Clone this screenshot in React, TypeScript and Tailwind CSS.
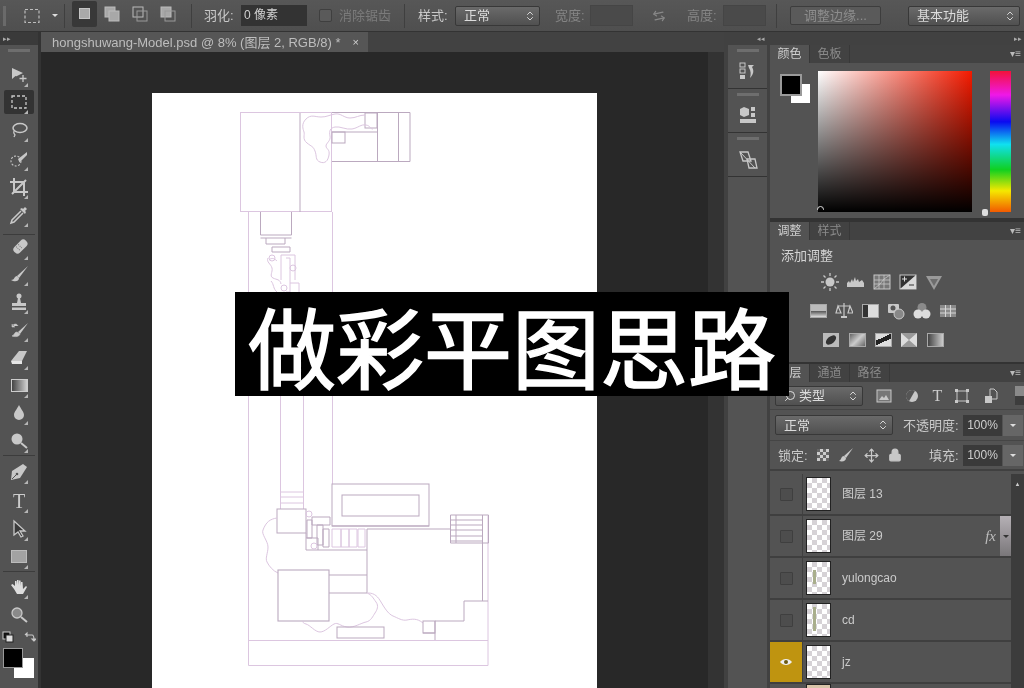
import type { ReactNode } from 'react';
import { ChevronsUpDown, Lock, Move, ArrowLeftRight, Search } from 'lucide-react';

const FONT = '[font-family:"Liberation_Sans","Noto_Sans_CJK_SC",sans-serif]';
const TXT = 'text-[#c9c9c9] text-[13px] leading-none whitespace-nowrap';

// small svg wrapper, all tool icons are drawn on a 20 box
function Svg({ children, size = 20, box = 20 }: { children: ReactNode; size?: number; box?: number }) {
  return (
    <svg width={size} height={size} viewBox={`0 0 ${box} ${box}`} className="shrink-0">
      {children}
    </svg>
  );
}

const G = '#c8c8c8';

function Corner() {
  return <span className="absolute right-[6px] bottom-[0px] w-0 h-0 border-l-[4px] border-l-transparent border-b-[4px] border-b-[#b5b5b5]" />;
}

function Tool({ h, active, corner = true, children }: { h: string; active?: boolean; corner?: boolean; children: ReactNode }) {
  return (
    <div className={`relative shrink-0 flex items-center justify-center ${h}`}>
      <div className={`relative w-[30px] h-[24px] rounded-[2px] flex items-center justify-center ${active ? 'bg-[#333333]' : ''}`}>
        {children}
        {corner && <Corner />}
      </div>
    </div>
  );
}

function ToolSep() {
  return <div className="shrink-0 h-[1px] mx-[3px] bg-[#3c3c3c]" />;
}

function ToolBar() {
  return (
    <div className="w-[38px] shrink-0 bg-[#535353] flex flex-col">
      <div className="h-[13px] bg-[#3a3a3a] text-[#aaa] text-[7px] leading-[13px] pl-[3px]">▸▸</div>
      <div className="h-[3px] mx-[8px] mt-[4px] mb-[9px] bg-[#6e6e6e]" />
      <Tool h="h-[27px]"><Svg><path d="M3 3v11l3.500-3 1 .2L14 8z" fill={G} /><path d="M14 10v7M10.500 13.500h7" stroke={G} strokeWidth="1.300" /></Svg></Tool>
      <Tool h="h-[28px]" active><Svg><rect x="3" y="4" width="14" height="12" fill="none" stroke={G} strokeWidth="1.300" strokeDasharray="3 2" /></Svg></Tool>
      <Tool h="h-[28px]"><Svg><ellipse cx="11" cy="8" rx="7" ry="4.500" fill="none" stroke={G} strokeWidth="1.500" /><path d="M5 11c-1 2 0 3 1 4l-1 2" fill="none" stroke={G} strokeWidth="1.300" /></Svg></Tool>
      <Tool h="h-[29px]"><Svg><circle cx="7" cy="12" r="5" fill="none" stroke={G} strokeWidth="1.100" strokeDasharray="2 1.500" /><path d="M18 3 9 10l1.500 3.500L18 6z" fill={G} /></Svg></Tool>
      <Tool h="h-[28px]"><Svg><path d="M5 1v14h14M1 5h14v14M3 17 17 3" fill="none" stroke={G} strokeWidth="2" /></Svg></Tool>
      <Tool h="h-[28px]"><Svg><path d="m12 6-9 9-1 3 3-1 9-9" fill="none" stroke={G} strokeWidth="1.500" /><path d="m11 4 5 5 1-2-1-1 2-2-2-2-2 2-1-1z" fill={G} /></Svg></Tool>
      <div className="h-[5px] shrink-0" />
      <ToolSep />
      <div className="h-[1px] shrink-0" />
      <Tool h="h-[24px]"><Svg><g transform="rotate(-45 10 10)"><rect x="4" y="6" width="16" height="8" rx="3.500" fill={G} /><path d="M9 7v6M12 7v6" stroke="#777" strokeDasharray="1 1" /></g></Svg></Tool>
      <Tool h="h-[28px]"><Svg><path d="M19 2 8 12l2 2z" fill={G} /><path d="M8 12c-3 0-2 4-6 4 3 2 8 2 8-2z" fill={G} /></Svg></Tool>
      <Tool h="h-[28px]"><Svg><circle cx="10" cy="4" r="2.500" fill={G} /><path d="M9 6h2l1 5h5v3H3v-3h5zM3 15.500h14V18H3z" fill={G} /></Svg></Tool>
      <Tool h="h-[28px]"><Svg><path d="M19 3 9 12l2 2z" fill={G} /><path d="M8 12c-3 0-2 3-5 4 3 1 7 1 8-2zM3 6c3-3 5-2 6 0M3 4v3h3" fill={G} stroke={G} strokeWidth=".600" /></Svg></Tool>
      <Tool h="h-[28px]"><Svg><path d="m10 3 8 0-5 10H2z" fill={G} /><path d="M2 13h11v3H3z" fill="#e5e5e5" /></Svg></Tool>
      <Tool h="h-[27px]"><div className="w-[17px] h-[13px] border border-[#ccc] bg-[linear-gradient(to_right,#444,#cfcfcf)]" /></Tool>
      <Tool h="h-[28px]"><Svg><path d="M10 2c2 4 5 7 5 10a5 5 0 0 1-10 0c0-3 3-6 5-10z" fill={G} /></Svg></Tool>
      <Tool h="h-[27px]"><Svg><circle cx="8" cy="8" r="5.500" fill={G} /><path d="m12 12 6 5" stroke={G} strokeWidth="2" /></Svg></Tool>
      <div className="h-[1px] shrink-0" />
      <ToolSep />
      <Tool h="h-[31px]"><Svg><path d="m18 5-4-3L3 9l-1 9 9-2z" fill={G} /><circle cx="8" cy="12" r="1.300" fill="#555" /><path d="m3 17 5-5" stroke="#555" /></Svg></Tool>
      <Tool h="h-[28px]"><span className="[font-family:'Liberation_Serif',serif] text-[#ccc] text-[20px] leading-none">T</span></Tool>
      <Tool h="h-[28px]"><Svg><path d="M5 2v14l4-3 3 5 2-1-3-5h5z" fill="#3a3a3a" stroke={G} strokeWidth="1.300" /></Svg></Tool>
      <Tool h="h-[27px]"><div className="w-[16px] h-[13px] border border-[#bbb] bg-[#a2a2a2]" /></Tool>
      <div className="h-[1px] shrink-0" />
      <ToolSep />
      <Tool h="h-[29px]"><Svg><path d="M5 12 2 8l1.500-1L6 9V4h1.500l.5 4V3h1.500l.5 5V3.500h1.500L12 9V5h1.500L14 12l3-3 1 1-4 7H8z" fill="#ddd" /></Svg></Tool>
      <Tool h="h-[28px]" corner={false}><Svg><circle cx="8" cy="8" r="5" fill="#8a8a8a" stroke={G} strokeWidth="1.300" /><path d="m12 12 6 5" stroke={G} strokeWidth="2" /></Svg></Tool>
      <div className="h-[16px] shrink-0 flex items-center justify-between px-[2px]">
        <Svg size={12} box={12}><rect x="1" y="1" width="7" height="7" fill="#111" stroke="#ccc" /><rect x="4" y="4" width="7" height="7" fill="#ddd" stroke="#222" /></Svg>
        <Svg size={12} box={12}><path d="M2 4h6c2 0 2 2 2 5M1 4l2-2v4M10 10l-2-2h4z" fill="none" stroke={G} strokeWidth="1.100" /></Svg>
      </div>
      <div className="relative h-[30px] mt-[3px] shrink-0">
        <div className="absolute left-[14px] top-[10px] w-[20px] h-[20px] bg-white" />
        <div className="absolute left-[3px] top-0 w-[20px] h-[20px] bg-black border border-[#999]" />
      </div>
    </div>
  );
}

function Sep({ ml, mr }: { ml: string; mr: string }) {
  return <div className={`w-[1px] h-[24px] bg-[#3f3f3f] shrink-0 ${ml} ${mr}`} />;
}

function Select({ w, children, dim }: { w: string; children: ReactNode; dim?: boolean }) {
  return (
    <div className={`${w} h-[20px] shrink-0 rounded-[2px] border border-[#383838] bg-[linear-gradient(to_bottom,#6a6a6a,#505050)] flex items-center justify-between pl-[8px] pr-[3px] ${dim ? 'text-[#8f8f8f]' : 'text-[#dcdcdc]'} text-[13px] leading-none whitespace-nowrap`}>
      {children}
      <ChevronsUpDown size={12} color="#d5d5d5" strokeWidth={2} />
    </div>
  );
}

function CombineIcon({ kind }: { kind: number }) {
  const a = kind === 2 ? 'none' : '#a8a8a8';
  return (
    <Svg size={16} box={16}>
      <rect x="1" y="1" width="10" height="10" fill={a} stroke="#bbb" />
      <rect x="5" y="5" width="10" height="10" fill={kind === 1 ? '#a8a8a8' : 'none'} stroke={kind === 1 ? '#bbb' : '#999'} />
    </Svg>
  );
}

function TopBar() {
  return (
    <div className={`h-[32px] shrink-0 flex items-center bg-[linear-gradient(to_bottom,#575757,#4f4f4f)] border-b border-[#333] ${FONT}`}>
      <div className="w-[3px] h-[20px] ml-[3px] mr-[18px] shrink-0 bg-[#6a6a6a]" />
      <Svg size={16} box={16}><rect x="1" y="1.500" width="14" height="13" fill="none" stroke="#bdbdbd" strokeWidth="1.200" strokeDasharray="3 2" /></Svg>
      <div className="w-0 h-0 ml-[12px] border-x-[3px] border-x-transparent border-t-[3px] border-t-[#ddd] shrink-0" />
      <Sep ml="ml-[6px]" mr="mr-[7px]" />
      <div className="w-[25px] h-[26px] -mt-[4px] shrink-0 bg-[#383838] rounded-[2px] flex items-center justify-center">
        <div className="w-[11px] h-[11px] bg-[#a9a9a9] border border-[#c5c5c5]" />
      </div>
      <div className="ml-[7px] mr-[12px] -mt-[4px]"><CombineIcon kind={1} /></div>
      <div className="mr-[12px] -mt-[4px]"><CombineIcon kind={2} /></div>
      <div className="-mt-[4px]"><CombineIcon kind={3} /></div>
      <Sep ml="ml-[15px]" mr="mr-[12px]" />
      <span className={`${TXT} w-[37px] shrink-0`}>羽化:</span>
      <div className="w-[66px] h-[21px] shrink-0 bg-[#333] text-[#d2d2d2] text-[12px] leading-[21px] pl-[3px] whitespace-nowrap">0 像素</div>
      <div className="w-[13px] h-[13px] ml-[12px] shrink-0 rounded-[2px] border border-[#3f3f3f] bg-[#5a5a5a]" />
      <span className="ml-[7px] w-[51px] shrink-0 text-[#7b7b7b] text-[13px] leading-none whitespace-nowrap">消除锯齿</span>
      <Sep ml="ml-[14px]" mr="mr-[13px]" />
      <span className={`${TXT} w-[37px] shrink-0`}>样式:</span>
      <Select w="w-[85px]">正常</Select>
      <span className="ml-[15px] w-[35px] shrink-0 text-[#858585] text-[13px] leading-none whitespace-nowrap">宽度:</span>
      <div className="w-[43px] h-[21px] shrink-0 bg-[#4a4a4a] border border-[#454545]" />
      <ArrowLeftRight size={14} color="#888" className="ml-[19px] shrink-0 -rotate-12" />
      <span className="ml-[21px] w-[36px] shrink-0 text-[#858585] text-[13px] leading-none whitespace-nowrap">高度:</span>
      <div className="w-[43px] h-[21px] shrink-0 bg-[#4a4a4a] border border-[#454545]" />
      <Sep ml="ml-[10px]" mr="mr-[13px]" />
      <div className="w-[91px] h-[19px] shrink-0 rounded-[2px] border border-[#3d3d3d] bg-[#5a5a5a] text-[#8d8d8d] text-[13px] leading-[17px] text-center whitespace-nowrap">调整边缘...</div>
      <div className="ml-[27px]"><Select w="w-[112px]">基本功能</Select></div>
    </div>
  );
}

const LINE = '#dcc6e0';
const DARK = '#bba9bf';

// the drawn plan, viewBox uses the page coordinates so it reads like the screenshot
function Plan() {
  return (
    <svg viewBox="152 93 445 595" width="445" height="595" className="block">
      <g fill="none" stroke={LINE} strokeWidth="1">
        <rect x="240.500" y="112.500" width="91" height="99" />
        <path d="M300 113v99" stroke={DARK} />
        <path d="M332 161.500h78V112.500h-78M377.500 113v48M398.500 113v48M332 132h45" stroke={DARK} />
        <rect x="332" y="132" width="13" height="11" stroke={DARK} />
        <rect x="365" y="113" width="12" height="15" stroke={DARK} />
        <path d="M365 115c-6 0-9 3-15 3s-9-5-15-4-8 3-14 3-10-3-15 2-3 10-2 13-2 7 3 11 6 3 8 8 0 9 5 11 8-1 9-7-3-6-3-9 5-5 4-10 0-8 5-9 11 3 17 2 9-5 14-4 4 4 7 4" />
        <path d="M248.500 212v80M332.500 212v80M248.500 396v269.500h239.500V515.500M332.500 396v88M280.500 396v113M303.500 396v113" />
        <path d="M260.500 212v23h31v-23M260.500 238h31M266 238v6h19v-6M272 247h18v5h-18z" stroke={DARK} />
        <path d="M281 280v-25h14v25M286 258h4v34h-4M269 260c3-3 6-1 8 1M268 258c-2 4 3 6 4 10s-3 8 1 10 7 1 8 6M271 281c3 3 2 8 6 11M290 283h9v9" />
        <circle cx="272" cy="258" r="3" /><circle cx="293" cy="268" r="3" /><circle cx="284" cy="288" r="3" />
        <path d="M281 492h22M281 497h22M281 503h22" />
        <rect x="277" y="509" width="29" height="24" stroke={DARK} />
        <rect x="332" y="484" width="97" height="42" stroke={DARK} />
        <rect x="342" y="495" width="77" height="21" stroke={DARK} />
        <path d="M332 526h97M367 529h83M367 529v64M482.500 515v86M450.500 515h38v28h-38zM456 515v28M450 520h32M450 525h32M450 530h32M450 536h32M450 541h32" stroke={DARK} />
        <path d="M332 529h9v18h-9zM341 529h8v18h-8zM349 529h8v18h-8zM358 529h7v18h-7z" />
        <path d="M306 533v17h61" stroke={DARK} />
        <path d="M312 517h18v8h-18zM307 520h5v18h-5zM317 525h6v20h-6zM323 529h6v18h-6zM306 538h12v12" stroke={DARK} />
        <circle cx="309" cy="514" r="3" /><circle cx="314" cy="546" r="3" />
        <path d="M277 518c-7 1-11 4-14 12-2 4 5 11 5 17s-3 11-1 15 6 9 11 11" />
        <rect x="278" y="570" width="51" height="51" stroke={DARK} strokeWidth="1.100" />
        <path d="M329 575h38M329 593h38" stroke={DARK} />
        <path d="M367 593c5 2 6 5 9 9s1 8-1 11-4 8-9 9-12 6-19 5-9-5-13-3-9 8-14 8-10-7-14-8-3-3-3-3" />
        <rect x="337" y="627" width="47" height="11" stroke={DARK} />
        <path d="M368 593c7 0 10 4 13 9s7 12 12 14 9 5 14 4 10-2 16 3" />
        <rect x="423" y="621" width="12" height="12" stroke={DARK} />
        <path d="M435 621v19M435 621h29v-20h24" stroke={DARK} />
        <path d="M248.500 640.500h239.500" />
        <path d="M423 633h12" stroke={DARK} />
      </g>
    </svg>
  );
}

function DocArea() {
  return (
    <div className={`flex-1 min-w-0 flex flex-col ml-[3px] ${FONT}`}>
      <div className="h-[20px] shrink-0 bg-[#424242] flex">
        <div className="w-[327px] h-[20px] bg-[#565656] flex items-center pl-[11px] text-[#bdbdbd] text-[13px] leading-none whitespace-nowrap">
          hongshuwang-Model.psd @ 8% (图层 2, RGB/8) *
          <span className="ml-[12px] text-[#d0d0d0] text-[11px]">×</span>
        </div>
      </div>
      <div className="flex-1 min-h-0 flex overflow-hidden">
        <div className="flex-1 min-w-0 bg-[#282828] pl-[111px] pt-[41px]">
          <div className="w-[445px] h-[595px] bg-white"><Plan /></div>
        </div>
        <div className="w-[16px] shrink-0 bg-[#333333]" />
      </div>
    </div>
  );
}

function DockBox({ h, children }: { h: string; children?: ReactNode }) {
  return (
    <div className={`${h} shrink-0 border-b border-[#333] flex flex-col items-center`}>
      <div className="w-[22px] h-[3px] mt-[4px] mb-[10px] bg-[#6e6e6e]" />
      {children}
    </div>
  );
}

function Dock() {
  return (
    <div className="w-[46px] shrink-0 bg-[#414141] flex flex-col pl-[4px] pr-[3px]">
      <div className="h-[13px] shrink-0 text-[#aaa] text-[7px] leading-[13px] text-right pr-[2px]">◂◂</div>
      <div className="flex-1 bg-[#535353] flex flex-col">
        <DockBox h="h-[44px]">
          <Svg size={18} box={18}><rect x="1" y="1" width="5" height="4" fill="none" stroke={G} /><rect x="1" y="7" width="5" height="4" fill="none" stroke={G} /><rect x="1" y="13" width="5" height="4" fill={G} /><path d="M9 3h6l-2 2c2 3 2 7-2 11 1-4 1-7-1-10z" fill={G} /></Svg>
        </DockBox>
        <DockBox h="h-[44px]">
          <Svg size={18} box={18}><path d="m5 1 5 2v6l-5 2-4-2V3z" fill={G} /><rect x="12" y="1" width="4" height="4" fill={G} /><rect x="12" y="7" width="4" height="4" fill={G} /><rect x="1" y="13" width="16" height="4" fill={G} /></Svg>
        </DockBox>
        <DockBox h="h-[44px]">
          <Svg size={20} box={20}><path d="M2 2h8l3 9H5zM9 9h8l2 9H11z" fill="none" stroke={G} strokeWidth="1.300" /><path d="m3 3 14 15" stroke={G} /></Svg>
        </DockBox>
      </div>
    </div>
  );
}

function Tabs({ items }: { items: string[] }) {
  return (
    <div className="h-[18px] shrink-0 bg-[#424242] flex items-stretch">
      {items.map((t, i) => (
        <div key={t} className={`w-[40px] text-center text-[12px] leading-[18px] border-r border-[#383838] ${i === 0 ? 'bg-[#535353] text-[#cfcfcf]' : 'text-[#8b8b8b]'}`}>
          {t}
        </div>
      ))}
      <div className="flex-1 text-right pr-[3px] text-[#bbb] text-[10px] leading-[18px]">▾≡</div>
    </div>
  );
}

function ColorPanel() {
  return (
    <div className="h-[173px] shrink-0 bg-[#535353] flex flex-col">
      <Tabs items={['颜色', '色板']} />
      <div className="flex pt-[8px]">
        <div className="relative w-[48px] shrink-0">
          <div className="absolute left-[21px] top-[13px] w-[19px] h-[19px] bg-white" />
          <div className="absolute left-[10px] top-[3px] w-[22px] h-[22px] bg-black border-2 border-[#9a9a9a]" />
        </div>
        <div className="relative w-[154px] h-[141px] shrink-0 bg-[linear-gradient(to_bottom,transparent,#000),linear-gradient(to_right,#fff,#f41a00)]">
          <div className="absolute -left-[1px] -bottom-[1px] w-[7px] h-[7px] rounded-full border border-[#ddd] [clip-path:inset(0_0_3px_0)]" />
        </div>
        <div className="relative w-[18px] shrink-0">
          <div className="absolute left-[10px] bottom-[-4px] w-[6px] h-[7px] rounded-[2px] bg-[#ddd]" />
        </div>
        <div className="w-[21px] h-[141px] shrink-0 bg-[linear-gradient(to_bottom,#f3123a,#ef18e8_17%,#0a0af0_36%,#10e0f0_52%,#10d020_70%,#f5e800_85%,#f25a00)]" />
      </div>
    </div>
  );
}

function AdjIcon({ children }: { children: ReactNode }) {
  return <div className="w-[26px] h-[20px] shrink-0 flex items-center justify-center">{children}</div>;
}

function Box({ className = '' }: { className?: string }) {
  return <div className={`w-[17px] h-[14px] border border-[#a9a9a9] ${className}`} />;
}

function AdjustPanel() {
  return (
    <div className="h-[140px] mt-[4px] shrink-0 bg-[#535353] flex flex-col">
      <Tabs items={['调整', '样式']} />
      <div className="pl-[11px] pt-[9px] text-[#d3d3d3] text-[13px] leading-none h-[27px]">添加调整</div>
      <div className="flex pl-[47px] h-[29px] items-center">
        <AdjIcon><Svg size={20} box={20}><circle cx="10" cy="10" r="4.500" fill={G} /><path d="M10 1v3M10 16v3M1 10h3M16 10h3M3.500 3.500l2 2M14.500 14.500l2 2M3.500 16.500l2-2M14.500 5.500l2-2" stroke={G} strokeWidth="1.300" /></Svg></AdjIcon>
        <AdjIcon><Svg size={20} box={20}><path d="M1 15V11l2-2 1 2 2-4 1 3 2-5 1 4 2-2 1 3 3-2 2 3v4z" fill={G} /></Svg></AdjIcon>
        <AdjIcon><Svg size={18} box={18}><rect x="1" y="2" width="16" height="14" fill="#777" stroke={G} /><path d="M1 16 7 11l4-5 6-4M6 2v14M11 2v14M1 7h16M1 11h16" stroke={G} strokeWidth=".800" fill="none" /></Svg></AdjIcon>
        <AdjIcon><Svg size={18} box={18}><rect x="1" y="2" width="16" height="14" fill="#333" stroke={G} /><path d="M1 16 17 2v14z" fill="#d9d9d9" /><path d="M3 6h5M5.500 3.500v5" stroke="#ddd" /><path d="M10 12h5" stroke="#333" /></Svg></AdjIcon>
        <AdjIcon><Svg size={18} box={18}><path d="M1 3h16L9 17z" fill="#9a9a9a" /><path d="M5 6h8L9 13z" fill="#6d6d6d" /></Svg></AdjIcon>
      </div>
      <div className="flex pl-[35px] h-[29px] items-center">
        <AdjIcon><Box className="bg-[linear-gradient(to_bottom,#bbb_50%,#555_50%,#ddd)]" /></AdjIcon>
        <AdjIcon><Svg size={18} box={18}><path d="M9 1v13M3 4h12M3 4 1 11h5zM15 4l-2 7h5z" stroke={G} fill="none" strokeWidth="1.200" /><rect x="6" y="14" width="6" height="2" fill={G} /></Svg></AdjIcon>
        <AdjIcon><Box className="bg-[linear-gradient(to_right,#333_35%,#ddd_35%)]" /></AdjIcon>
        <AdjIcon><Svg size={18} box={18}><rect x="1" y="2" width="11" height="9" rx="1" fill={G} /><circle cx="12" cy="12" r="5" fill="#888" stroke="#ccc" /><circle cx="6" cy="6" r="2.500" fill="#555" /></Svg></AdjIcon>
        <AdjIcon><Svg size={18} box={18}><circle cx="9" cy="5.500" r="4.500" fill="#8a8a8a" /><circle cx="5" cy="12" r="4.500" fill="#ddd" /><circle cx="13" cy="12" r="4.500" fill="#ddd" /></Svg></AdjIcon>
        <AdjIcon><Svg size={18} box={18}><rect x="1" y="3" width="16" height="12" fill="#8a8a8a" /><path d="M6.500 3v12M11.500 3v12M1 7h16M1 11h16" stroke="#d5d5d5" /></Svg></AdjIcon>
      </div>
      <div className="flex pl-[48px] h-[29px] items-center">
        <AdjIcon><Svg size={18} box={18}><rect x="1" y="2" width="16" height="14" fill="#bbb" /><ellipse cx="9" cy="9" rx="6" ry="3.500" fill="#333" transform="rotate(-40 9 9)" /></Svg></AdjIcon>
        <AdjIcon><Box className="bg-[linear-gradient(135deg,#666,#ccc,#666)]" /></AdjIcon>
        <AdjIcon><Box className="bg-[linear-gradient(155deg,#ddd_35%,#222_35%,#222_60%,#ddd_60%)]" /></AdjIcon>
        <AdjIcon><Svg size={18} box={18}><rect x="1" y="2" width="16" height="14" fill="#999" /><path d="M1 2 9 9 1 16zM17 2 9 9l8 7z" fill="#ddd" /></Svg></AdjIcon>
        <AdjIcon><Box className="bg-[linear-gradient(to_right,#444,#ccc)]" /></AdjIcon>
      </div>
    </div>
  );
}

function LayerThumb({ mark }: { mark?: string }) {
  return (
    <div className="relative w-[25px] h-[34px] shrink-0 border border-[#222] bg-[repeating-conic-gradient(#d6d2d6_0_25%,#ffffff_0_50%)] bg-[length:10px_10px]">
      {mark && <div className={`absolute left-[6px] ${mark} w-[3px] bg-[#a9ae8c]`} />}
    </div>
  );
}

function LayerRow({ name, mark, eye, fx }: { name: string; mark?: string; eye?: boolean; fx?: boolean }) {
  return (
    <div className="h-[42px] shrink-0 flex border-b-2 border-[#3f3f3f] items-stretch">
      <div className={`w-[33px] shrink-0 border-r border-[#404040] flex items-center justify-center ${eye ? 'bg-[#bf9410]' : ''}`}>
        {eye ? (
          <Svg size={14} box={14}><path d="M1 7c3-4 9-4 12 0-3 4-9 4-12 0z" fill="#eee" /><circle cx="7" cy="7" r="2" fill="#6b5a10" /></Svg>
        ) : (
          <div className="w-[13px] h-[13px] rounded-[1px] border border-[#3f3f3f] bg-[#4d4d4d]" />
        )}
      </div>
      <div className="pl-[3px] flex items-center"><LayerThumb mark={mark} /></div>
      <div className="flex-1 pl-[11px] flex items-center text-[#cbcbcb] text-[12px] leading-none whitespace-nowrap">{name}</div>
      {fx && (
        <>
          <span className="[font-family:'Liberation_Serif',serif] italic text-[#bdbdbd] text-[15px] leading-[40px] pr-[4px]">fx</span>
          <div className="w-[11px] bg-[linear-gradient(to_bottom,#b5b0b5,#7a777a)] flex items-center justify-center">
            <div className="w-0 h-0 border-x-[3px] border-x-transparent border-t-[3px] border-t-[#333]" />
          </div>
        </>
      )}
    </div>
  );
}

function NumBox() {
  return (
    <div className="flex shrink-0">
      <div className="w-[39px] h-[21px] bg-[#3a3a3a] text-[#cfcfcf] text-[12px] leading-[21px] text-center">100%</div>
      <div className="w-[20px] h-[21px] ml-[1px] bg-[#666] flex items-center justify-center">
        <div className="w-0 h-0 border-x-[3px] border-x-transparent border-t-[3px] border-t-[#ddd]" />
      </div>
    </div>
  );
}

function LayersPanel() {
  return (
    <div className="flex-1 min-h-0 mt-[2px] bg-[#535353] flex flex-col overflow-hidden">
      <Tabs items={['图层', '通道', '路径']} />
      <div className="h-[28px] shrink-0 flex items-center pl-[5px] border-b border-[#454545]">
        <Select w="w-[88px]">
          <span className="flex items-center gap-[3px]"><Search size={12} color="#ddd" className="-scale-x-100" />类型</span>
        </Select>
        <div className="flex items-center ml-[13px] w-[130px] justify-between">
          <Svg size={16} box={16}><rect x="1" y="2" width="14" height="12" fill="#777" stroke={G} /><path d="m3 12 3-4 2 2 2-3 3 5z" fill={G} /></Svg>
          <Svg size={16} box={16}><circle cx="8" cy="8" r="6" fill={G} /><path d="M8 2a6 6 0 0 0 0 12z" fill="#555" transform="rotate(30 8 8)" /></Svg>
          <span className="[font-family:'Liberation_Serif',serif] text-[#ccc] text-[16px] leading-none">T</span>
          <Svg size={16} box={16}><rect x="3" y="3" width="10" height="10" fill="none" stroke={G} /><path d="M1 1h3v3H1zM12 1h3v3h-3zM1 12h3v3H1zM12 12h3v3h-3z" fill={G} /></Svg>
          <Svg size={16} box={16}><path d="M7 1h4l3 3v7H7z" fill="none" stroke={G} /><rect x="2" y="8" width="7" height="7" fill={G} /></Svg>
        </div>
        <div className="ml-[16px] w-[10px] h-[19px] bg-[linear-gradient(to_bottom,#8a8a8a_50%,#3d3d3d_50%)]" />
      </div>
      <div className="h-[31px] shrink-0 flex items-center pl-[5px] border-b border-[#454545]">
        <Select w="w-[118px]">正常</Select>
        <span className={`${TXT} ml-[10px] w-[60px] shrink-0`}>不透明度:</span>
        <NumBox />
      </div>
      <div className="h-[30px] shrink-0 flex items-center pl-[8px] border-b-2 border-[#404040]">
        <span className={`${TXT} w-[39px] shrink-0`}>锁定:</span>
        <div className="w-[85px] shrink-0 flex items-center justify-between">
          <div className="w-[12px] h-[12px] bg-[repeating-conic-gradient(#ccc_0_25%,#666_0_50%)] bg-[length:6px_6px]" />
          <Svg size={16} box={16}><path d="M15 1 6 9l2 2z" fill={G} /><path d="M6 9c-3 0-2 3-5 5 4 1 7 0 7-3z" fill={G} /></Svg>
          <Move size={15} color={G} />
          <Lock size={14} color={G} fill={G} />
        </div>
        <span className={`${TXT} ml-[27px] w-[34px] shrink-0`}>填充:</span>
        <NumBox />
      </div>
      <div className="flex-1 min-h-0 flex pt-[3px]">
        <div className="flex-1 min-w-0 flex flex-col">
          <LayerRow name="图层 13" />
          <LayerRow name="图层 29" fx />
          <LayerRow name="yulongcao" mark="top-[8px] h-[14px]" />
          <LayerRow name="cd" mark="top-[3px] h-[24px]" />
          <LayerRow name="jz" eye />
          <div className="h-[6px] pl-[36px]"><div className="w-[25px] h-[6px] bg-[#d8c4a8] border border-[#222]" /></div>
        </div>
        <div className="w-[13px] shrink-0 bg-[#3c3c3c] text-center text-[#ccc] text-[6px] leading-[20px]">▲</div>
      </div>
    </div>
  );
}

function RightPanels() {
  return (
    <div className={`w-[254px] shrink-0 bg-[#333333] flex flex-col ${FONT}`}>
      <div className="h-[13px] shrink-0 bg-[#414141] text-[#aaa] text-[7px] leading-[13px] text-right pr-[2px]">▸▸</div>
      <ColorPanel />
      <AdjustPanel />
      <LayersPanel />
    </div>
  );
}

export default function App() {
  return (
    <div className="relative w-[1024px] h-[688px] overflow-hidden flex flex-col bg-[#333] [filter:blur(0.4px)]">
      <TopBar />
      <div className="flex-1 min-h-0 flex">
        <ToolBar />
        <DocArea />
        <Dock />
        <RightPanels />
      </div>
      {/* caption over the whole window */}
      <div className="absolute left-[235px] top-[292px] w-[554px] h-[104px] bg-black text-white flex items-center justify-center text-[88px] font-normal leading-none whitespace-nowrap [-webkit-text-stroke:1.5px_white] [font-family:'Noto_Sans_CJK_SC',sans-serif]">
        做彩平图思路
      </div>
    </div>
  );
}
